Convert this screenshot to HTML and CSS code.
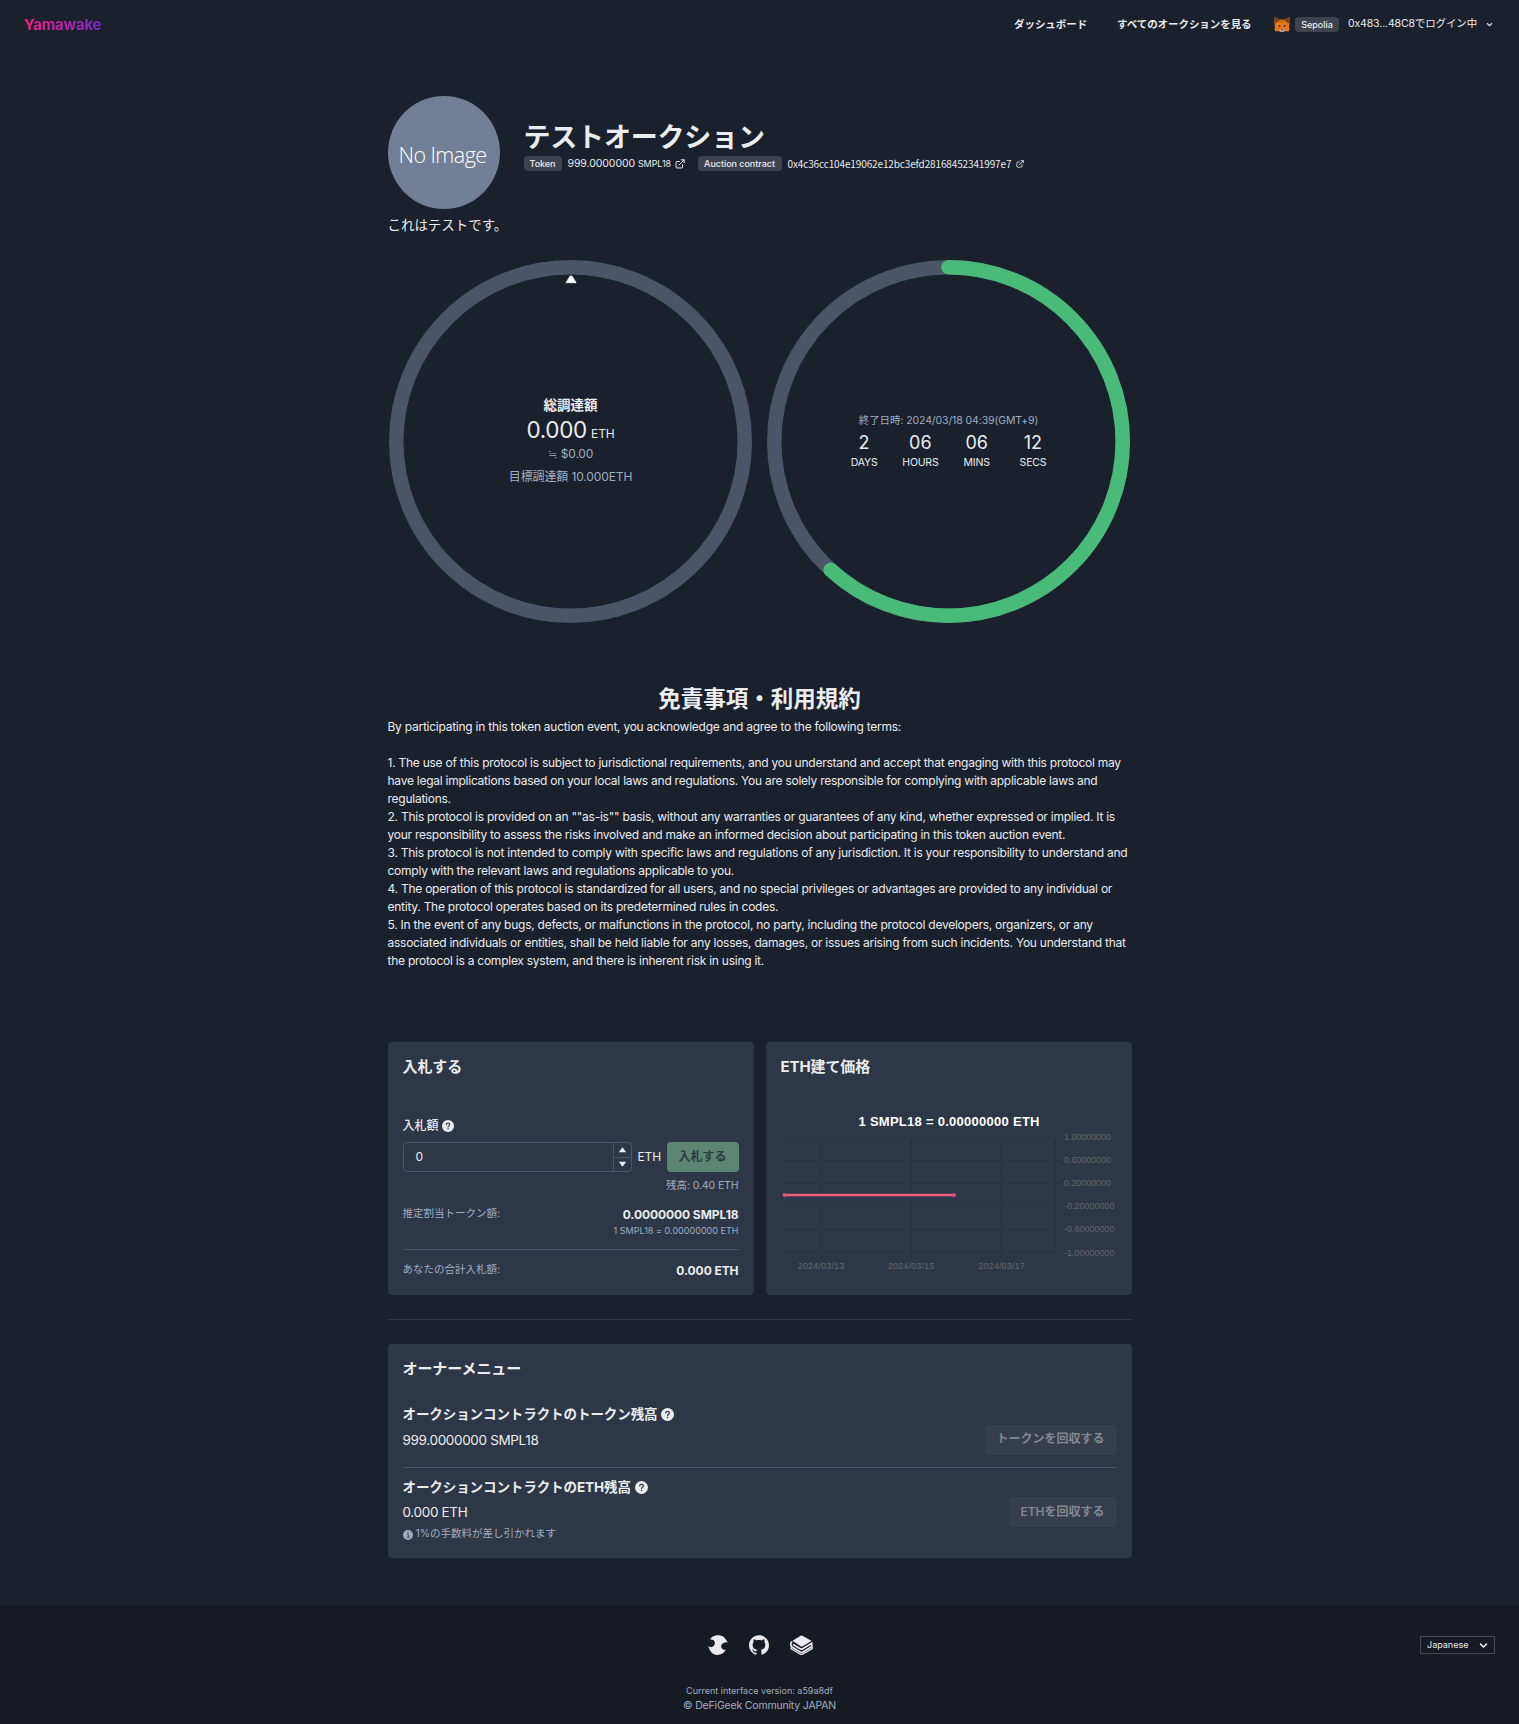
FILE: index.html
```html
<!DOCTYPE html>
<html lang="ja">
<head>
<meta charset="utf-8">
<title>Yamawake</title>
<link rel="stylesheet" href="styles.css">
</head>
<body>
<svg class="defs" width="0" height="0" aria-hidden="true">
  <symbol id="external" viewBox="0 0 24 24"><g fill="none" stroke="currentColor" stroke-width="2.400" stroke-linecap="round"><path d="M18 13.500v6a2 2 0 0 1-2 2H4.500a2 2 0 0 1-2-2V8a2 2 0 0 1 2-2h6"/><path d="M15 2h7v7M22 2 9.500 14.500"/></g></symbol>
  <symbol id="help" viewBox="0 0 24 24"><circle cx="12" cy="12" r="12" fill="currentColor"/><g fill="none" stroke="#2d3748" stroke-width="2.200" stroke-linecap="round"><path d="M8.600 9.200c.2-2 1.700-3 3.500-3 2 0 3.400 1.200 3.400 2.900 0 2.600-3.400 2.500-3.400 5"/></g><circle cx="12.100" cy="17.600" r="1.500" fill="#2d3748"/></symbol>
  <symbol id="info" viewBox="0 0 24 24"><circle cx="12" cy="12" r="12" fill="currentColor"/><path d="M9.500 10.500h3.300v7M9 17.500h6.500" fill="none" stroke="#2d3748" stroke-width="2"/><circle cx="12" cy="6.300" r="1.600" fill="#2d3748"/></symbol>
  <symbol id="chevron" viewBox="0 0 12 12"><path d="m1.500 3.500 4.500 4.500 4.500-4.500" fill="none" stroke="currentColor" stroke-width="2"/></symbol>
</svg>

<header class="header">
  <a class="brand">Yamawake</a>
  <nav class="nav">
    <a class="nav-link nav-dash">ダッシュボード</a>
    <a class="nav-link nav-all">すべてのオークションを見る</a>
    <svg class="fox" viewBox="0 0 32 32">
      <path d="M0 0 12 6h8L32 0v14l-1 7 1 5-2 5-8-1-3 1h-6l-3-1-8 1-2-5 1-5-1-7z" fill="#e8761b"/>
      <path d="M0 0l12 6-4 4-7 4zM32 0 20 6l4 4 7 4z" fill="#7c4218"/>
      <path d="M12 6h8l-2 7h-4z" fill="#c9641a"/>
      <path d="M7 18l4-1 2 4-2 1zM25 18l-4-1-2 4 2 1z" fill="#4a3a34"/>
      <path d="M9 30l4-5h6l4 5-4 1.500h-6z" fill="#d5bfb2"/>
      <path d="M13 26h6l.5 2.500h-7z" fill="#2c3a48"/>
    </svg>
    <span class="badge badge-net">Sepolia</span>
    <span class="account">0x483...48C8でログイン中</span>
    <svg class="account-chev"><use href="#chevron"/></svg>
  </nav>
</header>

<main class="main">
  <section class="intro">
    <div class="avatar"><span>No Image</span></div>
    <div class="intro-text">
      <h1 class="title">テストオークション</h1>
      <div class="meta">
        <span class="badge badge-token">Token</span>
        <span class="amount">999.0000000 <small>SMPL18</small></span>
        <svg class="ext"><use href="#external"/></svg>
        <span class="badge badge-contract">Auction contract</span>
        <span class="address">0x4c36cc104e19062e12bc3efd28168452341997e7</span>
        <svg class="ext ext-small"><use href="#external"/></svg>
      </div>
    </div>
  </section>
  <p class="description">これはテストです。</p>

  <section class="rings">
    <div class="ring">
      <svg class="ring-art" viewBox="0 0 100 100"><circle class="track" cx="50" cy="50" r="48"/><path d="M48.750 6.250 49.900 4.400h.5l1.150 1.850z" fill="#fff" stroke="#fff" stroke-width=".2"/></svg>
      <div class="ring-body ring-raised">
        <div class="raised-label">総調達額</div>
        <div class="raised">0.000 <small>ETH</small></div>
        <div class="usd">≒ $0.00</div>
        <div class="target">目標調達額 10.000ETH</div>
      </div>
    </div>
    <div class="ring">
      <svg class="ring-art" viewBox="0 0 100 100"><circle class="track" cx="50" cy="50" r="48"/><circle class="progress" cx="50" cy="50" r="48" pathLength="100" stroke-dasharray="61.900 100" transform="rotate(-90 50 50)"/></svg>
      <div class="ring-body">
        <div class="ends">終了日時: 2024/03/18 04:39(GMT+9)</div>
        <div class="count">
          <div><b>2</b><span>DAYS</span></div>
          <div><b>06</b><span>HOURS</span></div>
          <div><b>06</b><span>MINS</span></div>
          <div><b>12</b><span>SECS</span></div>
        </div>
      </div>
    </div>
  </section>

  <section class="terms">
    <h2>免責事項・利用規約</h2>
    <p>By participating in this token auction event, you acknowledge and agree to the following terms:<br><br>
1. The use of this protocol is subject to jurisdictional requirements, and you understand and accept that engaging with this protocol may<br>have legal implications based on your local laws and regulations. You are solely responsible for complying with applicable laws and<br>regulations.<br>
2. This protocol is provided on an ""as-is"" basis, without any warranties or guarantees of any kind, whether expressed or implied. It is<br>your responsibility to assess the risks involved and make an informed decision about participating in this token auction event.<br>
3. This protocol is not intended to comply with specific laws and regulations of any jurisdiction. It is your responsibility to understand and<br>comply with the relevant laws and regulations applicable to you.<br>
4. The operation of this protocol is standardized for all users, and no special privileges or advantages are provided to any individual or<br>entity. The protocol operates based on its predetermined rules in codes.<br>
5. In the event of any bugs, defects, or malfunctions in the protocol, no party, including the protocol developers, organizers, or any<br>associated individuals or entities, shall be held liable for any losses, damages, or issues arising from such incidents. You understand that<br>the protocol is a complex system, and there is inherent risk in using it.</p>
  </section>

  <section class="cards">
    <div class="card">
      <h3>入札する</h3>
      <div class="bid-label">入札額 <svg><use href="#help"/></svg></div>
      <div class="bid-row">
        <div class="field"><span class="field-value">0</span>
          <div class="stepper">
            <svg viewBox="0 0 18 14"><path d="M5 9.500 9 4l4 5.500z" fill="currentColor"/></svg>
            <svg viewBox="0 0 18 14"><path d="M5 4 9 9.500 13 4z" fill="currentColor"/></svg>
          </div>
        </div>
        <span class="unit">ETH</span>
        <button class="btn btn-bid">入札する</button>
      </div>
      <div class="balance">残高: 0.40 ETH</div>
      <div class="stat stat-first"><span>推定割当トークン額:</span><strong>0.0000000 SMPL18</strong></div>
      <div class="rate">1 SMPL18 = 0.00000000 ETH</div>
      <hr class="rule">
      <div class="stat stat-total"><span>あなたの合計入札額:</span><strong>0.000 ETH</strong></div>
    </div>
    <div class="card">
      <h3>ETH建て価格</h3>
      <svg class="chart" viewBox="0 0 336 180">
        <text class="chart-title" x="168" y="22.500" textLength="181">1 SMPL18 = 0.00000000 ETH</text>
        <path class="grid" d="M3 34.500h278M3 57.500h278M3 80.500h278M3 103.500h278M3 126.500h278M3 149.500h278M40.500 34v121M130.500 34v121M220.500 34v121M274.500 34v116"/>
        <g class="ticks">
          <text x="283" y="36.500" textLength="47">1.00000000</text><text x="283" y="59.500" textLength="47">0.60000000</text><text x="283" y="82.500" textLength="47">0.20000000</text><text x="283" y="105.500" textLength="50.500">-0.20000000</text><text x="283" y="128.500" textLength="50.500">-0.60000000</text><text x="283" y="152.500" textLength="50.500">-1.00000000</text>
        </g>
        <g class="ticks dates"><text x="40" y="165.500" textLength="46.500">2024/03/13</text><text x="130" y="165.500" textLength="46.500">2024/03/15</text><text x="220.500" y="165.500" textLength="46.500">2024/03/17</text></g>
        <path d="M3.500 92H173" stroke="#f35e7d" stroke-width="2.400"/><circle cx="3.500" cy="92" r="2" fill="#d15873"/><circle cx="173" cy="92" r="2" fill="#d15873"/>
      </svg>
    </div>
  </section>

  <hr class="separator">

  <section class="card owner">
    <h3>オーナーメニュー</h3>
    <div class="owner-row">
      <div><h4>オークションコントラクトのトークン残高 <svg><use href="#help"/></svg></h4><p class="value">999.0000000 SMPL18</p></div>
      <button class="btn btn-token">トークンを回収する</button>
    </div>
    <hr class="rule">
    <div class="owner-row owner-eth">
      <div><h4>オークションコントラクトのETH残高 <svg><use href="#help"/></svg></h4><p class="value value-eth">0.000 ETH</p>
      <p class="note"><svg><use href="#info"/></svg>1%の手数料が差し引かれます</p></div>
      <button class="btn btn-eth">ETHを回収する</button>
    </div>
  </section>
</main>

<footer class="footer">
  <div class="socials">
    <svg class="s-globe" viewBox="0 0 20 20"><path d="M5 1.500C8-.4 13-.4 15.800 2c1.200 1 2.200 3 4.200 5.500-2.500-.6-4.500.3-5.800 1.500-1.700 1.600-1.200 4 .5 5.200 1 .8 2.300.8 3.300.3-1.200 2-2.200 3.200-4 4.300-2.500 1.400-6 1.400-8.500.2-2-1.200-4-3.300-5.300-8C1.500 12.500 4 12.600 5.600 11 7.500 9 7 6.300 5.200 5.100 4.200 4.300 3 4.300 2 4.600c.6-1.300 1.700-2.400 3-3.100z" fill="currentColor"/></svg>
    <svg class="s-git" viewBox="0 0 24 24"><path fill="currentColor" d="M12 .297c-6.630 0-12 5.373-12 12 0 5.303 3.438 9.800 8.205 11.385.6.113.82-.258.82-.577 0-.285-.01-1.040-.015-2.040-3.338.724-4.042-1.610-4.042-1.610C4.422 18.070 3.633 17.700 3.633 17.700c-1.087-.744.084-.729.084-.729 1.205.084 1.838 1.236 1.838 1.236 1.070 1.835 2.809 1.305 3.495.998.108-.776.417-1.305.76-1.605-2.665-.3-5.466-1.332-5.466-5.930 0-1.310.465-2.380 1.235-3.220-.135-.303-.54-1.523.105-3.176 0 0 1.005-.322 3.300 1.230.96-.267 1.980-.399 3-.405 1.020.006 2.040.138 3 .405 2.280-1.552 3.285-1.230 3.285-1.230.645 1.653.24 2.873.12 3.176.765.840 1.230 1.910 1.230 3.220 0 4.610-2.805 5.625-5.475 5.920.42.360.81 1.096.81 2.220 0 1.606-.015 2.896-.015 3.286 0 .315.21.690.825.570C20.565 22.092 24 17.592 24 12.297c0-6.627-5.373-12-12-12"/></svg>
    <svg class="s-book" viewBox="0 0 23 20"><path d="M2.500 5.800 10.600.8q.9-.5 1.800 0l8.600 4.700q.6.400 0 .8l-8.300 5q-1 .5-2 0z" fill="currentColor"/><path d="M2.300 6.400C.2 7.600.4 11.200 2.200 12.300l8.300 4.900q1 .6 2 0l9.200-5.500V8.300l-9.300 5.600q-.9.500-1.800 0L3 9.500" fill="none" stroke="currentColor" stroke-width="1.700"/><path d="M1 12.500v1.200l9.400 5.500q1.100.6 2.200 0l9.600-5.600v-1.600" fill="none" stroke="currentColor" stroke-width="1.300"/></svg>
  </div>
  <div class="version">Current interface version: a59a8df</div>
  <div class="copyright">© DeFiGeek Community JAPAN</div>
  <div class="language"><span>Japanese</span><svg><use href="#chevron"/></svg></div>
</footer>
</body>
</html>
```
FILE: styles.css
```css
* { box-sizing: border-box; margin: 0; padding: 0; }
body { background: #1a202c; color: #ebecee; font: 12px/18px Inter, "Noto Sans CJK JP", sans-serif; }
svg { display: block; flex: none; }
.defs { display: none; }
h1, h2, h3, h4 { font-weight: 700; white-space: nowrap; }
hr { border: 0; height: 1px; }

.header { height: 48px; padding: 0 24px; display: flex; justify-content: space-between; align-items: center; }
.brand { font-size: 15px; font-weight: 700; letter-spacing: -.25px; background: linear-gradient(90deg, #ff1f87, #7928ca); -webkit-background-clip: text; background-clip: text; color: transparent; margin-top: 2px; }
.nav { display: flex; align-items: center; font-size: 10.500px; white-space: nowrap; }
.nav-link { font-weight: 700; letter-spacing: -.06px; margin-top: 2px; }
.nav-dash { width: 103px; }
.nav-all { width: 157px; }
.fox { width: 16px; height: 15px; margin-right: 5px; }
.badge { background: #3f434e; border-radius: 4px; height: 15px; line-height: 15px; font-size: 9px; font-weight: 500; text-align: center; white-space: nowrap; flex: none; letter-spacing: -.04px; }
.badge-net { width: 44px; margin-right: 9px; }
.account { width: 138px; letter-spacing: -.13px; }
.account-chev { width: 7px; height: 7px; margin-right: 2px; }

.main { width: 744px; margin: 48px auto 0; }
.intro { display: flex; gap: 24px; height: 113px; }
.avatar { width: 112px; height: 113px; border-radius: 50%; background: #718096; display: flex; align-items: center; justify-content: center; font: 300 21.500px/28px "Open Sans", sans-serif; color: #fff; padding: 5px 2px 0 0; white-space: nowrap; letter-spacing: -.55px; }
.intro-text { padding-top: 24px; }
.title { font-size: 27px; line-height: 35px; letter-spacing: -.2px; }
.meta { display: flex; align-items: center; height: 16px; white-space: nowrap; margin-top: 1px; font-size: 10.500px; }
.meta .badge { margin-top: -2px; }
.badge-token { width: 38px; margin-right: 6px; }
.amount { width: 107.500px; letter-spacing: -.08px; }
.amount small { font-size: 9px; }
.ext { width: 10px; height: 10px; margin-right: 12.500px; }
.badge-contract { width: 84px; margin-right: 6px; }
.address { width: 228px; font-family: "Noto Sans CJK JP", sans-serif; font-size: 10px; letter-spacing: -.13px; margin-top: -1px; }
.ext-small { width: 8px; height: 8px; margin: 0; }
.description { font-size: 13.500px; line-height: 20px; margin-top: 6px; letter-spacing: -.05px; }

.rings { display: grid; grid-template-columns: 1fr 1fr; gap: 12px; margin-top: 25px; height: 363px; }
.ring { display: grid; justify-items: center; }
.ring-art { grid-area: 1 / 1; width: 363px; height: 363px; }
.ring-art circle { fill: none; stroke-width: 4; }
.ring-art .track { stroke: #4a5568; }
.ring-art .progress { stroke: #48bb78; stroke-linecap: round; }
.ring-body { grid-area: 1 / 1; align-self: center; text-align: center; white-space: nowrap; }
.ring-raised { padding-bottom: 2px; }
.raised-label { font-size: 13.500px; font-weight: 700; line-height: 20px; }
.raised { font-size: 22.500px; line-height: 30px; height: 30px; letter-spacing: -.3px; }
.raised small { font-size: 12px; line-height: 1; letter-spacing: -.1px; margin-left: -2px; }
.usd, .target, .ends { color: #a0aec0; }
.usd { line-height: 17px; height: 18px; letter-spacing: -.2px; }
.target { margin-top: 5px; letter-spacing: -.12px; }
.ends { font-size: 10.500px; line-height: 16px; letter-spacing: -.1px; }
.count { display: grid; grid-template-columns: repeat(4, 56.300px); justify-content: center; }
.count b { display: block; font-size: 18px; line-height: 27px; font-weight: 400; }
.count span { display: block; font-size: 10.500px; line-height: 14px; letter-spacing: -.2px; }

.terms { margin-top: 61px; height: 358px; }
.terms h2 { font-size: 22.500px; line-height: 30px; text-align: center; }
.terms p { white-space: nowrap; margin-top: 4px; letter-spacing: -.25px; }

.cards { display: grid; grid-template-columns: 1fr 1fr; gap: 12px; }
.card { background: #2d3748; border-radius: 4px; padding: 15px; height: 253px; }
.card h3 { font-size: 15px; line-height: 20px; height: 18px; letter-spacing: -.1px; }
.bid-label { display: flex; align-items: center; gap: 3px; height: 18px; margin-top: 42px; font-weight: 500; }
.bid-label svg { width: 12px; height: 12px; }
.bid-row { display: flex; height: 30px; margin-top: 7px; align-items: center; }
.field { width: 229px; height: 30px; border: 1px solid #4a5568; border-radius: 4px; display: flex; justify-content: space-between; }
.field-value { line-height: 28px; padding-left: 12px; }
.stepper { width: 18px; border-left: 1px solid #4a5568; }
.stepper svg { width: 17px; height: 14px; }
.stepper svg + svg { border-top: 1px solid #4a5568; }
.unit { width: 35px; padding-left: 6px; letter-spacing: -.1px; }
.btn { border: 0; border-radius: 4px; height: 30px; font: 600 12px/28px Inter, "Noto Sans CJK JP", sans-serif; white-space: nowrap; padding-bottom: 1px; }
.btn-bid { width: 72px; background: #5c8674; color: #2a3b43; padding-bottom: 0; }
.balance { font-size: 10.500px; line-height: 16px; text-align: right; color: #a0aec0; margin-top: 6px; letter-spacing: -.1px; }
.stat { display: flex; justify-content: space-between; align-items: center; height: 18px; margin-top: 11px; }
.stat span { font-size: 10.500px; color: #a0aec0; margin-top: -3px; }
.stat strong { font-weight: 700; letter-spacing: -.07px; }
.stat-first { margin-top: 12px; }
.stat-total { margin-top: 12px; }
.rate { font-size: 9px; line-height: 14px; text-align: right; color: #a0aec0; letter-spacing: .02px; }
.rule { background: #4a5568; margin-top: 11px; }
.chart { width: 336px; height: 180px; margin-top: 28px; font-family: "Liberation Sans", sans-serif; }
.chart-title { font-size: 13px; font-weight: 700; fill: #fff; text-anchor: middle; }
.grid { fill: none; stroke: #29313f; stroke-width: 1; }
.ticks { font-size: 9px; fill: #666; }
.dates { text-anchor: middle; }

.separator { background: #2f3541; margin: 24px 0; }
.card.owner { height: 214px; }
.owner-row { display: flex; justify-content: space-between; align-items: flex-end; margin-top: 26px; height: 53px; }
.owner h4 { font-size: 13.500px; line-height: 20px; display: flex; align-items: center; gap: 4px; letter-spacing: -.08px; }
.owner h4 svg { width: 13px; height: 13px; }
.value { font-size: 13.500px; line-height: 20px; margin: 6px 0 6px; letter-spacing: -.34px; }
.owner .rule { margin-top: 11px; }
.btn-token, .btn-eth { background: #363d4c; color: #84888f; }
.btn-token { width: 132px; margin-bottom: 1px; padding-bottom: 2px; }
.btn-eth { width: 108px; margin-top: 20px; }
.owner-eth { height: 66px; margin-top: 9px; align-items: flex-start; }
.value-eth { margin: 5px 0 4px; }
.note { display: flex; align-items: center; gap: 3px; font-size: 10.500px; line-height: 16px; color: #a0aec0; }
.note svg { width: 10px; height: 10px; margin-top: 2px; }

.footer { position: relative; margin-top: 47px; height: 119px; background: #171923; padding-top: 30px; text-align: center; color: #a0aec0; }
.socials { display: flex; justify-content: center; gap: 21px; height: 20px; color: #ebebed; padding-left: 2px; }
.s-globe, .s-git { width: 20px; height: 20px; }
.s-book { width: 23px; height: 20px; }
.version { font-size: 9px; line-height: 14px; margin-top: 29px; letter-spacing: 0; }
.copyright { font-size: 10.500px; line-height: 15px; letter-spacing: -.18px; }
.language { position: absolute; right: 24px; top: 31px; width: 75px; height: 18px; border: 1px solid #464a52; display: flex; align-items: center; justify-content: space-between; padding: 0 6px; font-size: 9px; color: #ebebed; }
.language svg { width: 9px; height: 9px; }
```
